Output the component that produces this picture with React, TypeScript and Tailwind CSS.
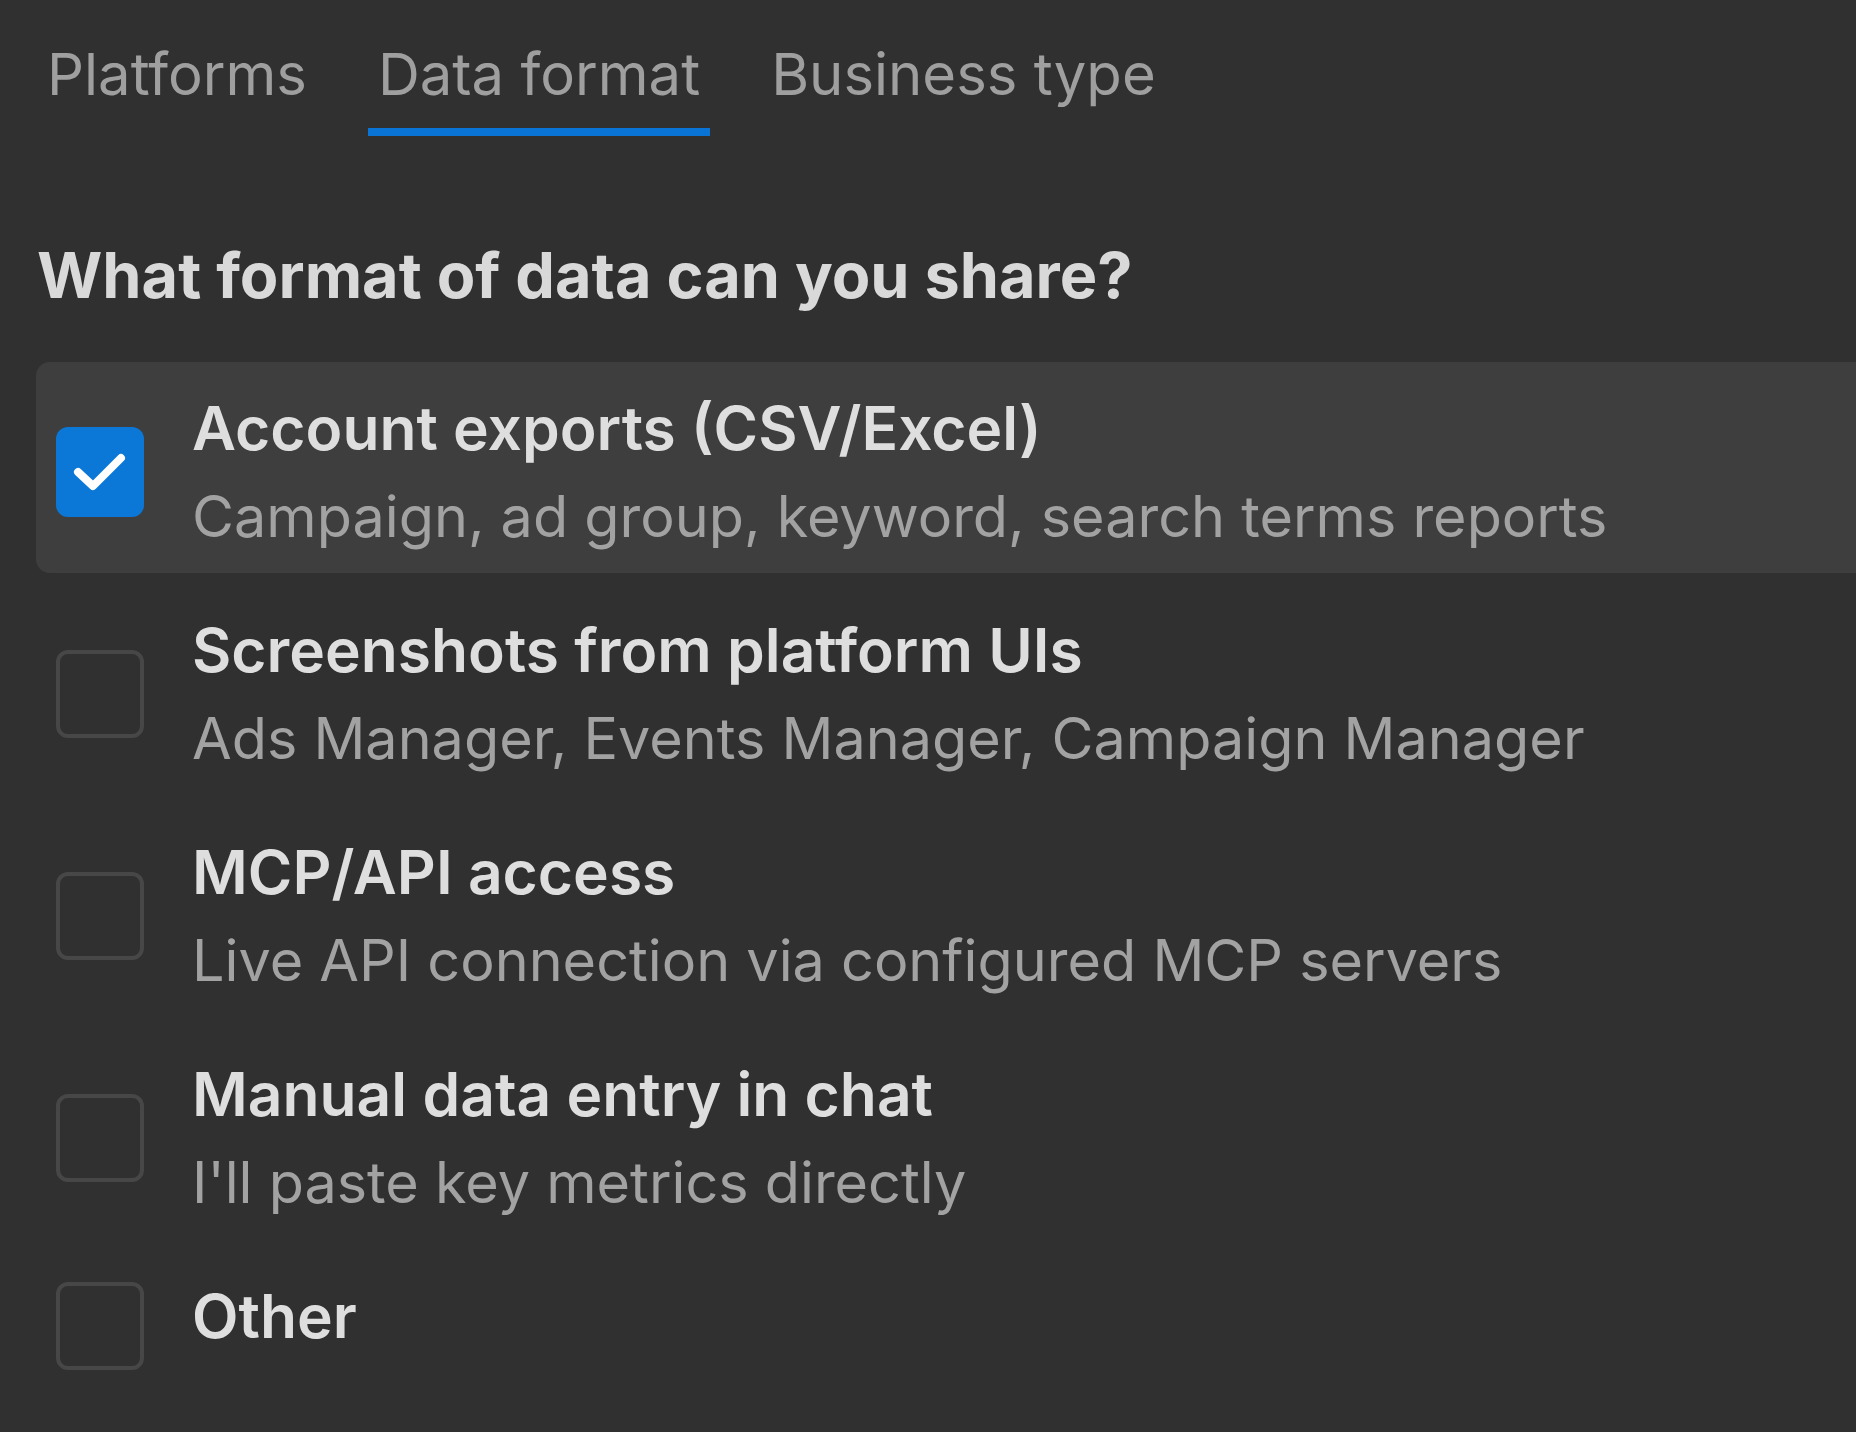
import React from "react";

const rows = [
  { title: "Account exports (CSV/Excel)", sub: "Campaign, ad group, keyword, search terms reports", checked: true },
  { title: "Screenshots from platform UIs", sub: "Ads Manager, Events Manager, Campaign Manager", checked: false },
  { title: "MCP/API access", sub: "Live API connection via configured MCP servers", checked: false },
  { title: "Manual data entry in chat", sub: "I'll paste key metrics directly", checked: false },
  { title: "Other", sub: "", checked: false },
];

function Box({ checked, single }: { checked: boolean; single: boolean }) {
  const pos = single ? "mt-[10px]" : "";
  if (checked) {
    return (
      <div className={"w-[88px] h-[90px] shrink-0 rounded-[12px] bg-[#0b78d8] " + pos}>
        <svg width="88" height="90" viewBox="0 0 88 90" fill="none">
          <path d="M22 45 L37 59 L65 31" stroke="white" strokeWidth="8" strokeLinecap="round" strokeLinejoin="round" />
        </svg>
      </div>
    );
  }
  return <div className={"w-[88px] h-[88px] shrink-0 rounded-[12px] border-[4px] border-[#474747] " + pos} />;
}

export default function App() {
  return (
    <div
      className="w-[1856px] h-[1432px] overflow-hidden bg-[#303030]"
      style={{ fontFamily: "Inter, 'Noto Sans', sans-serif" }}
    >
      <div className="flex gap-[51px] pl-[37px] pt-[32px]">
        {["Platforms", "Data format", "Business type"].map((t, i) => (
          <div key={t} className="flex flex-col">
            <div className="px-[10px] text-[58px] leading-[84px] text-[#9f9f9f]">{t}</div>
            <div className={i === 1 ? "mt-[12px] h-[8px] bg-[#0a74d6]" : "mt-[12px] h-[8px]"} />
          </div>
        ))}
      </div>
      <div className="pl-[37px] pt-[89px] text-[63px] leading-[100px] font-bold text-[#d9d9d9]">
        What format of data can you share?
      </div>
      <div className="pl-[36px] pt-[37px] flex flex-col gap-[11px]">
        {rows.map((r) => (
          <div
            key={r.title}
            className={
              "flex gap-[48px] pl-[20px] pt-[22px] pb-[13px] rounded-l-[14px] " +
              (r.sub ? "items-center " : "items-start ") +
              (r.checked ? "bg-[#3e3e3e]" : "")
            }
          >
            <Box checked={r.checked} single={!r.sub} />
            <div className="flex flex-col">
              <div className="text-[60.5px] leading-[88px] font-semibold text-[#dedede] whitespace-nowrap">
                {r.title}
              </div>
              {r.sub && (
                <div className="text-[57.5px] leading-[88px] text-[#a2a2a2] whitespace-nowrap">{r.sub}</div>
              )}
            </div>
          </div>
        ))}
      </div>
    </div>
  );
}
